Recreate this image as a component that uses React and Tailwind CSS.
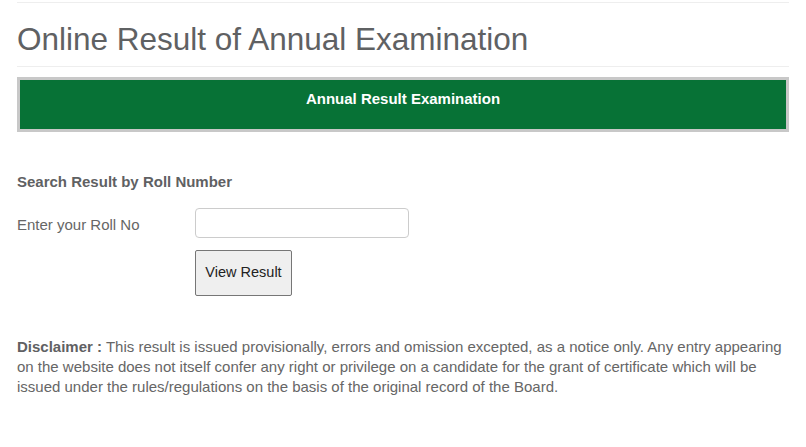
import React from 'react';

export default function App() {
  return (
    <div className="min-h-screen w-full bg-white font-['Liberation_Sans',Arial,sans-serif] text-[#666]">
      <div className="px-[17px] pt-[2px]">
        <div className="border-t border-[#eee]" />
        <h1 className="mt-[18px] text-[31.5px] leading-[36px] text-[#5f6163]">Online Result of Annual Examination</h1>
        <div className="mt-[9px] border-t border-[#eee]" />

        <div className="mt-[10px] h-[55px] border-[3px] border-[#c8c8c8] bg-[#077236] pt-[9px] text-center text-[15px] font-bold leading-[20px] text-white">
          Annual Result Examination
        </div>

        <h3 className="mt-[40px] text-[15px] font-bold leading-[20px] text-[#5f6163]">Search Result by Roll Number</h3>

        <div className="mt-[16px] flex items-center">
          <label className="w-[178px] pt-[3px] text-[15px] leading-[20px] text-[#666]">Enter your Roll No</label>
          <input type="text" className="h-[30px] w-[214px] rounded-[4px] border border-[#ccc] bg-white px-2 text-[14px] outline-none" />
        </div>

        <div className="mt-[12px] pl-[178px]">
          <button className="h-[46px] w-[97px] rounded-[2px] border border-[#767676] bg-[#efefef] text-[14.5px] text-[#222]">
            View Result
          </button>
        </div>

        <p className="mt-[41px] text-[15px] leading-[20px] text-[#666]">
          <span className="font-bold text-[#5f6163]">Disclaimer :</span>{' '}
          This result is issued provisionally, errors and omission excepted, as a notice only. Any entry appearing on the website does not itself confer any right or privilege on a candidate for the grant of certificate which will be issued under the rules/regulations on the basis of the original record of the Board.
        </p>
      </div>
    </div>
  );
}
